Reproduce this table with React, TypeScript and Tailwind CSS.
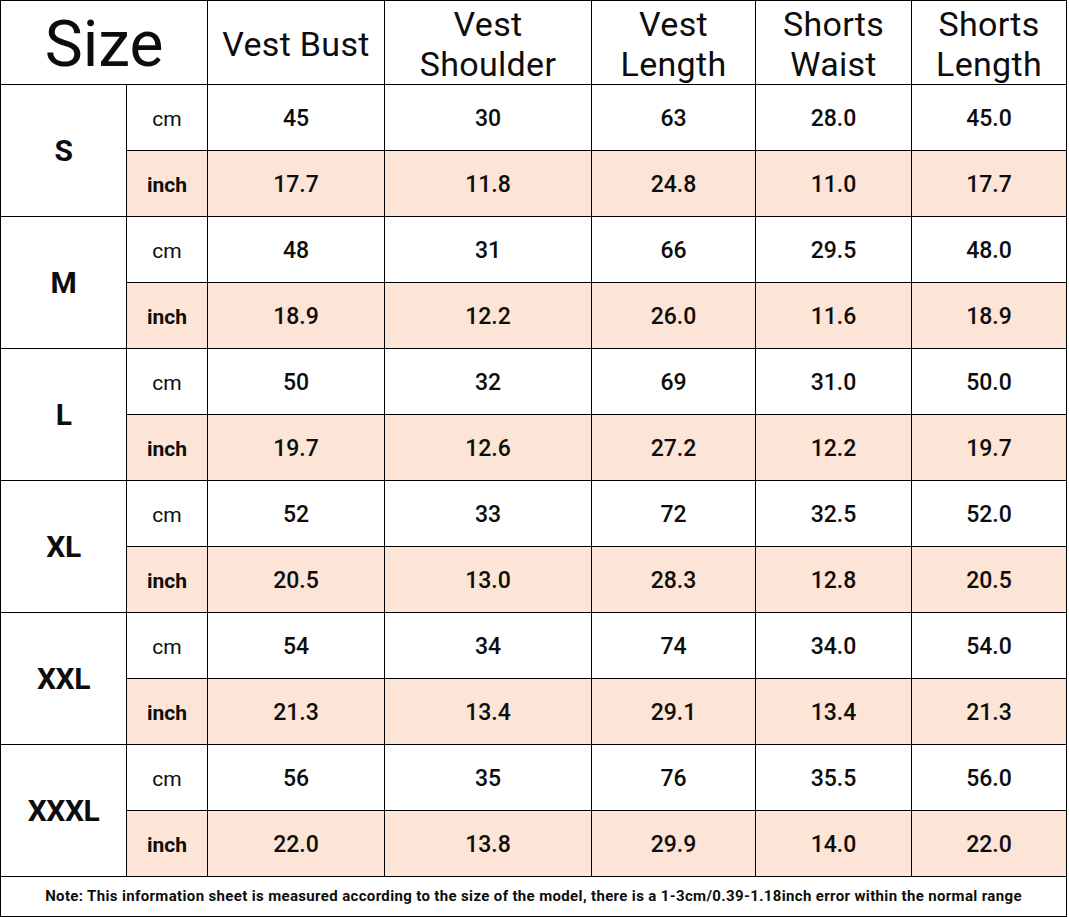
type SizeRow = {
    label: string;
    cm: string[];
    inch: string[];
};

const headers: string[][] = [
    ['Vest Bust'],
    ['Vest', 'Shoulder'],
    ['Vest', 'Length'],
    ['Shorts', 'Waist'],
    ['Shorts', 'Length'],
];

const rows: SizeRow[] = [
    { label: 'S', cm: ['45', '30', '63', '28.0', '45.0'], inch: ['17.7', '11.8', '24.8', '11.0', '17.7'] },
    { label: 'M', cm: ['48', '31', '66', '29.5', '48.0'], inch: ['18.9', '12.2', '26.0', '11.6', '18.9'] },
    { label: 'L', cm: ['50', '32', '69', '31.0', '50.0'], inch: ['19.7', '12.6', '27.2', '12.2', '19.7'] },
    { label: 'XL', cm: ['52', '33', '72', '32.5', '52.0'], inch: ['20.5', '13.0', '28.3', '12.8', '20.5'] },
    { label: 'XXL', cm: ['54', '34', '74', '34.0', '54.0'], inch: ['21.3', '13.4', '29.1', '13.4', '21.3'] },
    { label: 'XXXL', cm: ['56', '35', '76', '35.5', '56.0'], inch: ['22.0', '13.8', '29.9', '14.0', '22.0'] },
];

const cell = 'flex items-center justify-center text-center';

export default function App() {
    return (
        <div className="min-h-[917px] w-[1069px] bg-white font-['Roboto',sans-serif] text-[#0d0d0d]">
            <div className="grid w-[1067px] grid-cols-[125px_80px_176px_206px_163px_155px_154px] grid-rows-[83px_repeat(12,65px)_39px] gap-px bg-black p-px">
                <div className={`${cell} col-span-2 bg-white pt-1 text-[64px] leading-none`}>Size</div>
                {headers.map((lines, i) => (
                    <div key={i} className={`${cell} flex-col bg-white pt-0.5 text-[34px] leading-[40px] tracking-[0.3px]`}>
                        {lines.map((line) => (
                            <span key={line}>{line}</span>
                        ))}
                    </div>
                ))}

                {rows.map((row) => (
                    <div key={row.label} className="contents">
                        <div className={`${cell} row-span-2 bg-white text-[30px] font-bold tracking-[-0.5px]`}>
                            {row.label}
                        </div>
                        <div className={`${cell} bg-white pt-1 text-[21px]`}>cm</div>
                        {row.cm.map((v, i) => (
                            <div key={`cm-${i}`} className={`${cell} bg-white pt-1 text-[23px] font-medium`}>
                                {v}
                            </div>
                        ))}
                        <div className={`${cell} bg-[#fce4d6] pt-1 text-[21px] font-bold`}>inch</div>
                        {row.inch.map((v, i) => (
                            <div key={`in-${i}`} className={`${cell} bg-[#fce4d6] pt-1 text-[23px] font-medium`}>
                                {v}
                            </div>
                        ))}
                    </div>
                ))}

                <div className={`${cell} col-span-7 bg-white text-[15px] font-bold tracking-[0.35px]`}>
                    Note: This information sheet is measured according to the size of the model, there is a 1-3cm/0.39-1.18inch error within the normal range
                </div>
            </div>
        </div>
    );
}
